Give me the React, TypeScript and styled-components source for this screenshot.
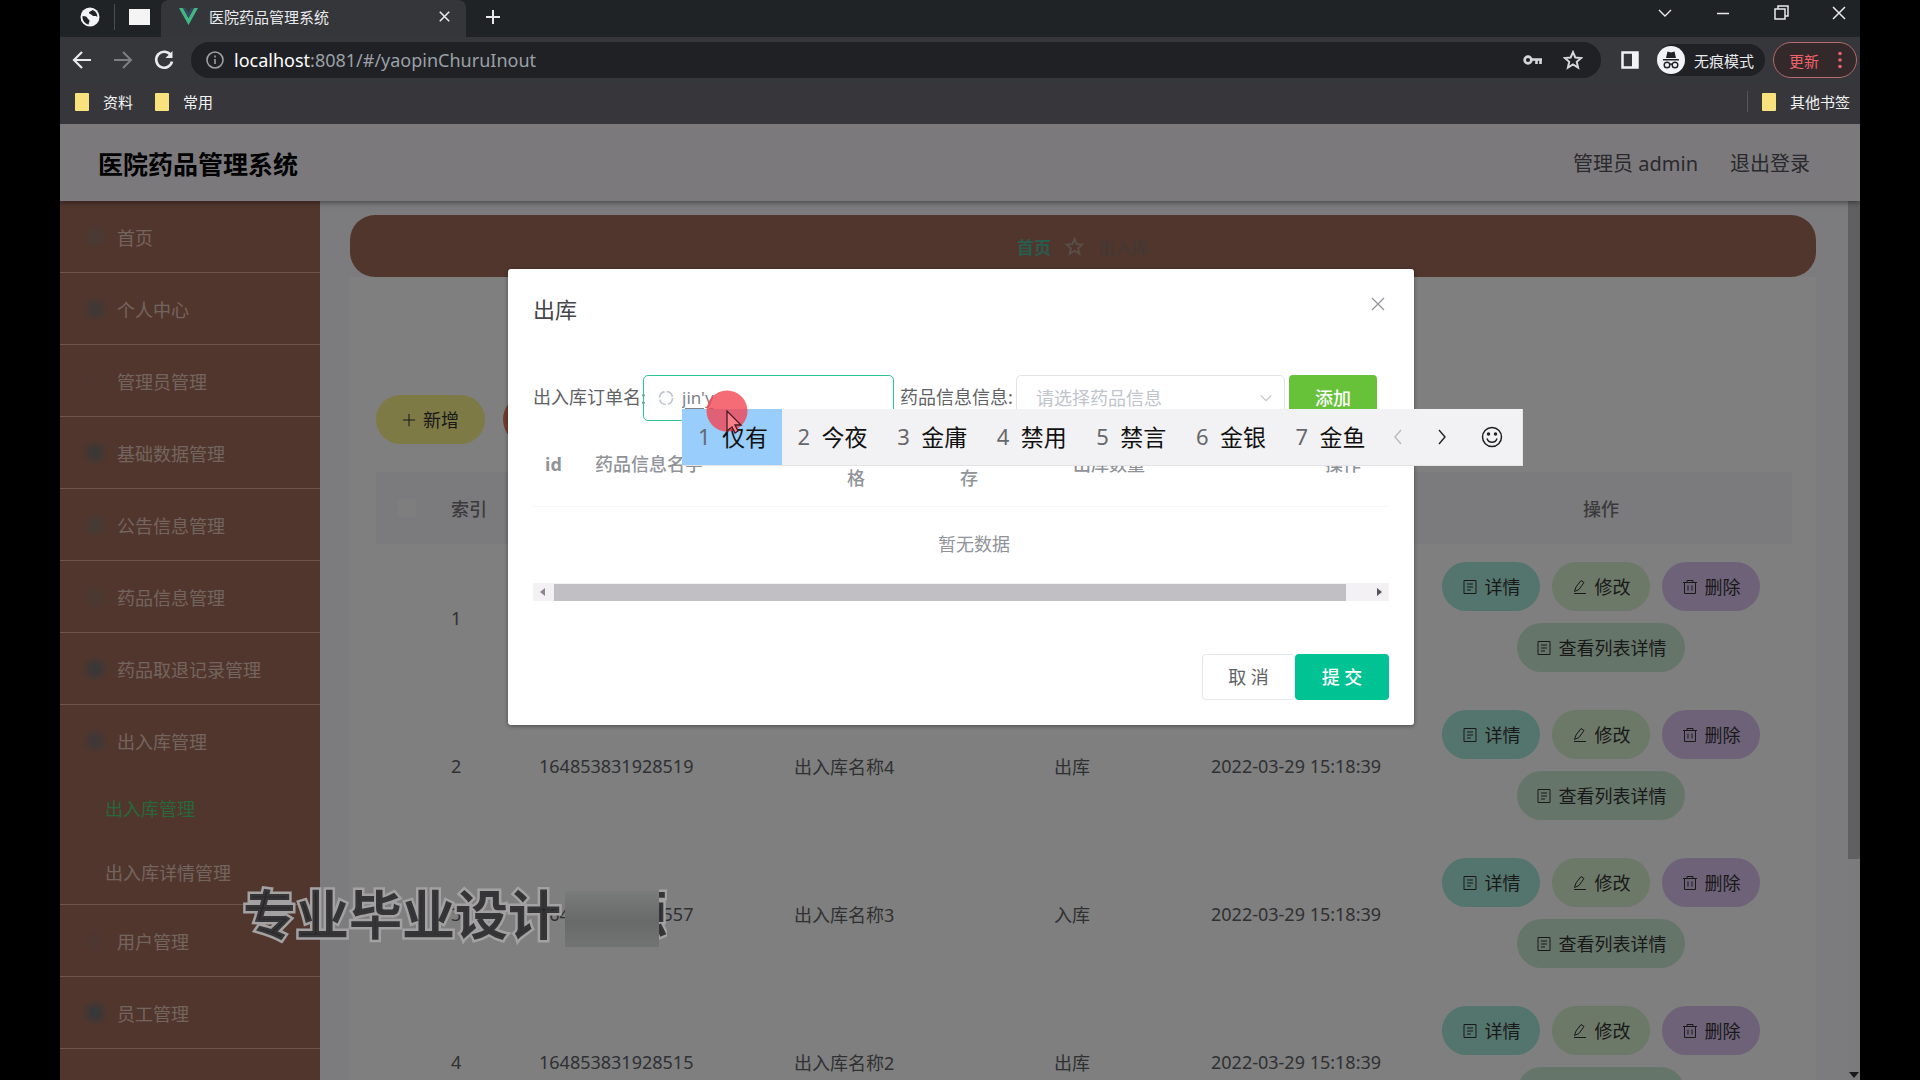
import React from 'react';
import styled, { createGlobalStyle, css } from 'styled-components';

const Global = createGlobalStyle`
  * { box-sizing: border-box; }
  html, body { margin: 0; background: #000; }
  body, button, input, select, table {
    font-family: "Noto Sans", "Noto Sans CJK SC", sans-serif;
    font-size: 18px;
  }
  button { border: 0; padding: 0; background: none; color: inherit; cursor: pointer; }
  a { color: inherit; text-decoration: none; }
  ul { margin: 0; padding: 0; list-style: none; }
  svg { display: block; flex: none; }
`;

const Screen = styled.div`
  height: 100vh;
  padding: 0 60px;
  overflow: hidden;
  display: flex;
  flex-direction: column;
  position: relative;
`;

/* ---------- browser chrome ---------- */

const TabStrip = styled.div`
  display: flex;
  height: 37px;
  flex: none;
  background: #202326;
  color: #e8eaed;
`;

const PinnedTabs = styled.div`
  display: flex;
  align-items: center;
  width: 101px;
  padding: 0 11px 4px 20px;
  gap: 14px;
  border-bottom-right-radius: 8px;
`;

const TabDivider = styled.span`
  width: 1px;
  height: 26px;
  background: #4a4d51;
`;

const ActiveTab = styled.div`
  display: flex;
  align-items: center;
  width: 305px;
  padding: 0 16px 4px 18px;
  gap: 11px;
  background: #35363a;
  border-radius: 8px 8px 0 0;
  font-size: 15px;
  span { flex: 1; }
`;

const NewTab = styled.button`
  width: 54px;
  padding-bottom: 4px;
  display: grid;
  place-items: center;
`;

const WindowButtons = styled.div`
  display: flex;
  align-items: center;
  margin-left: auto;
  padding-bottom: 12px;
  gap: 16px;
  button { width: 42px; height: 26px; display: grid; place-items: center; }
`;

const Toolbar = styled.div`
  display: flex;
  align-items: center;
  flex: none;
  height: 48px;
  padding: 0 3px 2px 10px;
  background: #35373a;
  color: #e8eaed;
`;

const NavButtons = styled.div`
  display: flex;
  gap: 17px;
  width: 121px;
`;

const AddressBar = styled.div`
  display: flex;
  align-items: center;
  flex: 1;
  height: 36px;
  padding: 0 18px 0 15px;
  gap: 10px;
  border-radius: 18px;
  background: #202125;
  color: #9aa0a6;
`;

const BarIcons = styled.div`
  display: flex;
  align-items: center;
  gap: 20px;
  color: #d5d7da;
`;

const Url = styled.div`
  flex: 1;
  font-size: 18px;
  line-height: 24px;
  b { font-weight: 400; color: #fff; }
`;

const SidePanelButton = styled.button`
  width: 56px;
  padding-left: 2px;
  display: grid;
  place-items: center;
`;

const Incognito = styled.div`
  display: flex;
  align-items: center;
  height: 32px;
  width: 108px;
  gap: 9px;
  border-radius: 16px;
  background: #202125;
  font-size: 15px;
  white-space: nowrap;
`;

const UpdateButton = styled.button`
  display: flex;
  align-items: center;
  justify-content: space-between;
  height: 36px;
  width: 84px;
  margin-left: 8px;
  padding: 0 14px 0 15px;
  border: 1px solid #b46a70;
  border-radius: 18px;
  background: #33282a;
  color: #f0626a;
  font-size: 15px;
`;

const Bookmarks = styled.div`
  display: flex;
  align-items: center;
  flex: none;
  height: 39px;
  padding: 0 10px 6px 15px;
  gap: 22px;
  background: #37373b;
  color: #f1f3f4;
  font-size: 15px;
`;

const Bookmark = styled.a`
  display: flex;
  align-items: center;
  gap: 14px;
`;

const OtherBookmarks = styled(Bookmark)`
  margin-left: auto;
  padding-left: 14px;
  border-left: 1px solid #54555a;
`;

const Folder = styled.span`
  width: 14px;
  height: 18px;
  border-radius: 1px;
  background: #f9e27d;
`;

/* ---------- page ---------- */

const Page = styled.div`
  position: relative;
  flex: 1;
  min-height: 0;
  display: flex;
  flex-direction: column;
  overflow: hidden;
  background: #fff;
  color: #606266;
`;

const Header = styled.header`
  display: flex;
  align-items: center;
  flex: none;
  height: 77px;
  padding: 0 50px 0 38px;
  gap: 32px;
  background: #f6f2f8;
  box-shadow: 0 1px 6px rgba(0, 0, 0, 0.5);
  z-index: 1;
  font-size: 20px;
  color: #55535a;
  h1 {
    margin: 0 auto 0 0;
    font-size: 25px;
    font-weight: 700;
    color: #000;
  }
`;

const Body = styled.div`
  display: flex;
  flex: 1;
  min-height: 0;
`;

const Sidebar = styled.nav`
  width: 260px;
  flex: none;
  background: #a26d5b;
  color: #e6c8bc;
`;

const MenuItem = styled.li`
  border-bottom: 1px solid #dda898;
`;

const MenuLink = styled.a`
  display: flex;
  align-items: center;
  height: 71px;
  padding-left: 27px;
  gap: 14px;
`;

const SubLink = styled.a<{ $active?: boolean }>`
  display: flex;
  align-items: center;
  height: 64px;
  padding-left: 45px;
  color: ${(p) => (p.$active ? '#4fcf74' : 'inherit')};
`;

const MenuGlyph = styled.span<{ $tint: string }>`
  width: 16px;
  height: 16px;
  border-radius: 5px;
  background: ${(p) => p.$tint};
  filter: blur(3px);
`;

const Main = styled.main`
  flex: 1;
  min-width: 0;
  padding: 14px 32px 0 30px;
  overflow: hidden;
  background: #f8f6fa;
`;

const Breadcrumb = styled.div`
  display: flex;
  align-items: center;
  justify-content: center;
  height: 62px;
  gap: 14px;
  border-radius: 25px;
  background: #a26d5b;
  font-size: 17px;
  color: #b59c92;
  a { color: #52b898; font-weight: 700; }
  span { color: #84706c; }
`;

const Card = styled.section`
  padding: 118px 24px 0 26px;
  background: #fefefe;
  height: 100%;
`;

const Actions = styled.div`
  display: flex;
  gap: 18px;
  margin-bottom: 28px;
`;

const Pill = styled.button<{ $bg: string; $wide?: boolean }>`
  display: flex;
  align-items: center;
  justify-content: center;
  height: 49px;
  width: ${(p) => (p.$wide ? 168 : 98)}px;
  gap: 7px;
  border-radius: 25px;
  background: ${(p) => p.$bg};
  color: #333;
  font-size: 18px;
  line-height: 26px;
  white-space: nowrap;
`;

const ActionPill = styled(Pill)`
  width: 109px;
`;

const DataTable = styled.table`
  width: 100%;
  border-collapse: collapse;
  table-layout: fixed;
  text-align: left;
  th { height: 72px; padding: 0 0 0 12px; font-weight: 500; background: #f6f4f8; color: #77747a; }
  td { height: 148px; padding: 0 0 0 12px; color: #606266; }
  th:last-child { text-align: center; padding: 0; }
  td:last-child { padding: 0 0 2px; }
`;

const RowActions = styled.div`
  display: flex;
  flex-wrap: wrap;
  justify-content: center;
  gap: 12px;
`;

const Check = styled.input`
  appearance: none;
  width: 18px;
  height: 18px;
  margin: 0 0 0 10px;
  border-radius: 3px;
  background: #fcfcfd;
  display: block;
`;

const ScrollTrack = styled.div`
  width: 12px;
  flex: none;
  display: flex;
  flex-direction: column;
  justify-content: space-between;
  align-items: center;
  background: #f6f5f8;
  padding-bottom: 2px;
`;

const ScrollThumb = styled.div`
  width: 12px;
  height: 75%;
  margin-bottom: auto;
  background: #c1c1c4;
`;

const Overlay = styled.div`
  position: absolute;
  inset: 0;
  z-index: 2;
  display: flex;
  justify-content: center;
  align-items: flex-start;
  padding: 145px 0 0 2px;
  background: rgba(0, 0, 0, 0.5);
`;

/* ---------- dialog ---------- */

const Dialog = styled.section`
  position: relative;
  width: 906px;
  padding: 24px 25px 25px 25px;
  border-radius: 3px;
  background: #fff;
  box-shadow: 0 1px 4px rgba(0, 0, 0, 0.4);
`;

const DialogHead = styled.div`
  display: flex;
  justify-content: space-between;
  margin-bottom: 50px;
  h2 { margin: 0; font-size: 22px; line-height: 32px; font-weight: 400; color: #45464a; }
  button { height: 22px; width: 22px; color: #909399; display: grid; place-items: center; }
`;

const FormRow = styled.div`
  display: flex;
  align-items: center;
  color: #606266;
  label { white-space: nowrap; width: 110px; line-height: 24px; padding-bottom: 2px; }
`;

const OrderField = styled.div`
  display: flex;
  align-items: center;
  flex: none;
  width: 251px;
  height: 46px;
  padding: 0 13px;
  gap: 7px;
  margin-right: 6px;
  border: 1px solid #2fc58f;
  border-radius: 5px;
  color: #c0c4cc;
  input {
    width: 100%;
    border: 0;
    padding: 0 0 2px;
    outline: 0;
    background: none;
    color: #808287;
    font-size: 17px;
    text-decoration: underline;
    text-underline-offset: 4px;
  }
`;

const DrugField = styled.div`
  display: flex;
  align-items: center;
  flex: none;
  width: 269px;
  height: 46px;
  padding: 0 11px 0 19px;
  margin: 0 4px 0 6px;
  border: 1px solid #e2e3e8;
  border-radius: 5px;
  color: #c0c4cc;
  select {
    appearance: none;
    flex: 1;
    border: 0;
    padding: 0;
    background: none;
    color: #c0c4cc;
    font-size: 18px;
  }
`;

const solid = css`
  height: 46px;
  padding-bottom: 2px;
  border-radius: 4px;
  color: #fff;
  font-weight: 500;
`;

const AddButton = styled.button`
  ${solid}
  width: 88px;
  background: #67c23a;
`;

const StockTable = styled.table`
  width: 100%;
  margin-top: 12px;
  border-collapse: collapse;
  table-layout: fixed;
  line-height: 29px;
  color: #909399;
  th { height: 73px; padding: 0 0 10px; font-weight: 500; text-align: left; vertical-align: middle; border-bottom: 1px solid #f8f8fa; }
  th:first-child { padding-left: 12px; font-weight: 700; }
  td { height: 77px; text-align: center; padding: 0 0 0 26px; }
`;

const WrapCell = styled.span`
  display: block;
  width: 18px;
`;

const HScroll = styled.div`
  display: flex;
  align-items: center;
  height: 18px;
  padding: 0 7px;
  gap: 9px;
  background: #f3f1f4;
  color: #57555a;
`;

const HThumb = styled.div`
  flex: 1;
  height: 17px;
  margin-right: 22px;
  background: #c1bfc3;
`;

const Footer = styled.div`
  display: flex;
  justify-content: flex-end;
  padding-top: 53px;
`;

const CancelButton = styled.button`
  width: 93px;
  height: 46px;
  padding-bottom: 2px;
  border: 1px solid #e6e7ec;
  border-right-color: #f6f7f9;
  border-radius: 4px;
  color: #606266;
`;

const SubmitButton = styled.button`
  ${solid}
  width: 94px;
  background: #00c292;
`;

/* ---------- floating layers ---------- */

const Ime = styled.div`
  position: absolute;
  z-index: 3;
  left: 174px;
  top: 140px;
  display: flex;
  width: 841px;
  height: 57px;
  background: #f2f2f4;
  border: 1px solid #e4e4e6;
  border-width: 0 1px 1px 0;
  color: #111;
`;

const Candidates = styled.div`
  display: flex;
  width: 697px;
  button { flex: 1; display: flex; align-items: center; padding: 0 0 2px 16px; gap: 12px; font-size: 23px; }
  button:first-child { background: #99cdfc; }
  span { color: #66686c; width: 12px; font-size: 22px; }
`;

const ImeTool = styled.button<{ $w: number; $light?: boolean }>`
  width: ${(p) => p.$w}px;
  display: grid;
  place-items: center;
  color: ${(p) => (p.$light ? '#b9babc' : '#222')};
`;

const Cursor = styled.div`
  position: absolute;
  z-index: 4;
  left: 198px;
  top: 121px;
`;

const Watermark = styled.div`
  position: absolute;
  z-index: 3;
  left: 243px;
  top: 879px;
  display: flex;
  align-items: center;
  font-size: 53px;
  line-height: 72px;
  font-weight: 700;
  color: rgba(35, 35, 38, 0.85);
  -webkit-text-stroke: 5px #a3a1a1;
  paint-order: stroke fill;
`;

const Smudge = styled.span`
  width: 94px;
  height: 56px;
  margin: 8px 0 0 4px;
  background: linear-gradient(180deg, #7a7c7b, #686a69 55%, #727473);
`;

const Sliver = styled.span`
  display: flex;
  justify-content: flex-end;
  width: 8px;
  overflow: hidden;
`;

/* ---------- icons ---------- */

const stroke = { fill: 'none', stroke: 'currentColor' } as const;

const DocIcon = () => (
  <svg width="16" height="16" viewBox="0 0 16 16" {...stroke}>
    <path d="M2 1.5h12v13H2zM5 5h6M5 8h6M5 11h4" />
  </svg>
);
const PenIcon = () => (
  <svg width="16" height="16" viewBox="0 0 16 16" {...stroke}>
    <path d="M2.5 12.5 4 8 9 1.500 12 3.500 7 10.500zM2 14.500h12" />
  </svg>
);
const TrashIcon = () => (
  <svg width="16" height="16" viewBox="0 0 16 16" {...stroke}>
    <path d="M1 3.500h14M5 3.500v-2h6v2M2.500 3.500v11h11v-11M6 6.500v5M10 6.500v5" />
  </svg>
);
const XIcon = ({ size = 14, w = 1.5 }: { size?: number; w?: number }) => (
  <svg width={size} height={size} viewBox="0 0 14 14" {...stroke} strokeWidth={w}>
    <path d="M1 1 13 13M13 1 1 13" />
  </svg>
);
const PlusIcon = ({ size = 16, w = 1.2 }: { size?: number; w?: number }) => (
  <svg width={size} height={size} viewBox="0 0 16 16" {...stroke} strokeWidth={w}>
    <path d="M8 1v14M1 8h14" />
  </svg>
);
const Chevron = ({ d, size = 16 }: { d: 'down' | 'left' | 'right'; size?: number }) => (
  <svg width={size} height={size} viewBox="0 0 16 16" {...stroke} strokeWidth="1.4">
    <path d={{ down: 'M2 5l6 6 6-6', left: 'M11 1 5 8l6 7', right: 'M5 1l6 7-6 7' }[d]} />
  </svg>
);
const StarIcon = ({ size = 19 }: { size?: number }) => (
  <svg width={size} height={size} viewBox="0 0 24 24" {...stroke} strokeWidth="2.400">
    <path d="M12 2.500 14.800 9l7 .6-5.300 4.600 1.600 6.900L12 17.400l-6.100 3.700 1.600-6.900L2.200 9.600l7-.6z" />
  </svg>
);

const menuTop: [string, string][] = [
  ['首页', '#91776a'],
  ['个人中心', '#7c716f'],
  ['管理员管理', '#9f6f5f'],
  ['基础数据管理', '#74716d'],
  ['公告信息管理', '#88756a'],
  ['药品信息管理', '#937464'],
  ['药品取退记录管理', '#717072'],
];

const rows: [string, string, string, string][] = [
  ['1', '164853831928521', '出入库名称5', '入库'],
  ['2', '164853831928519', '出入库名称4', '出库'],
  ['3', '164853831928557', '出入库名称3', '入库'],
  ['4', '164853831928515', '出入库名称2', '出库'],
];

const candidates = ['仅有', '今夜', '金庸', '禁用', '禁言', '金银', '金鱼'];

function BrowserChrome() {
  return (
    <>
      <TabStrip>
        <PinnedTabs>
          <svg width="20" height="20" viewBox="0 0 20 20">
            <circle cx="10" cy="10" r="9.500" fill="#f1f3f4" />
            <path d="M2.500 9c3 0 4.500.8 5 2.300.4 1.200 2 1 2 2.500 0 1.300-.8 2-.8 3.700C5 17 2.200 13.500 2.500 9zM12.500 3c-1 1.400-3 1-3.500 2.500-.4 1.300 1.500 1.300 2.500 2.200 1 .8 1.800 1.500 3.300 1.300 1.200-.2 1.700.3 2.500 1C17.500 6.500 15.500 4 12.500 3z" fill="#202326" />
          </svg>
          <TabDivider />
          <svg width="21" height="16" viewBox="0 0 21 16"><path d="M0 0h21v16H0z" fill="#f4f4f4" /></svg>
        </PinnedTabs>
        <ActiveTab>
          <svg width="19" height="17" viewBox="0 0 19 17">
            <path d="M0 0h4l5.500 10L15 0h4L9.500 17z" fill="#41b883" />
            <path d="M4 0h3l2.500 4.500L12 0h3L9.500 10z" fill="#35495e" />
          </svg>
          <span>医院药品管理系统</span>
          <button aria-label="关闭标签页"><XIcon size={11} w={2} /></button>
        </ActiveTab>
        <NewTab aria-label="新标签页"><PlusIcon size={16} w={2} /></NewTab>
        <WindowButtons>
          <button aria-label="搜索标签页"><Chevron d="down" /></button>
          <button aria-label="最小化">
            <svg width="14" height="14" viewBox="0 0 14 14" {...stroke}><path d="M1 7.500h12" strokeWidth="1.500" /></svg>
          </button>
          <button aria-label="还原">
            <svg width="15" height="15" viewBox="0 0 15 15" {...stroke} strokeWidth="1.500"><path d="M1 4h10v10H1zM4 4V1h10v10h-3" /></svg>
          </button>
          <button aria-label="关闭"><XIcon size={14} /></button>
        </WindowButtons>
      </TabStrip>
      <Toolbar>
        <NavButtons>
          <button aria-label="后退">
            <svg width="24" height="24" viewBox="0 0 24 24" {...stroke} strokeWidth="2.200"><path d="M21 12H4M12 4l-8 8 8 8" /></svg>
          </button>
          <button aria-label="前进">
            <svg width="24" height="24" viewBox="0 0 24 24" fill="none" stroke="#7c7f83" strokeWidth="2"><path d="M3 12h17M12 4l8 8-8 8" /></svg>
          </button>
          <button aria-label="刷新">
            <svg width="24" height="24" viewBox="0 0 24 24" {...stroke} strokeWidth="2.600"><path d="M19 7.500A8 8 0 1 0 20 13.500" /><path d="M20.500 3v7h-7z" fill="currentColor" stroke="none" /></svg>
          </button>
        </NavButtons>
        <AddressBar>
          <svg width="18" height="18" viewBox="0 0 18 18" {...stroke} strokeWidth="1.600"><circle cx="9" cy="9" r="8" /><path d="M9 8v5M9 4.500v2" /></svg>
          <Url><b>localhost</b>:8081/#/yaopinChuruInout</Url>
          <BarIcons>
            <svg width="20" height="14" viewBox="0 0 20 14" {...stroke} strokeWidth="2.600"><circle cx="5" cy="7" r="3.400" /><path d="M8.500 6.500H19M13.500 7v4M17.500 7v4" /></svg>
            <StarIcon size={20} />
          </BarIcons>
        </AddressBar>
        <SidePanelButton aria-label="侧边栏">
          <svg width="18" height="18" viewBox="0 0 18 18"><path d="M1.500 1.500h15v15h-15z" fill="none" stroke="#f1f3f4" strokeWidth="2.500" /><path d="M11 1h6v16h-6z" fill="#f1f3f4" /></svg>
        </SidePanelButton>
        <Incognito>
          <svg width="28" height="28" viewBox="0 0 28 28">
            <circle cx="14" cy="14" r="14" fill="#f1f3f4" />
            <path d="M6 13h16v1.500H6zM9 12l1.500-6.500L14 6.500l3.500-1L19 12z" fill="#202326" />
            <g fill="none" stroke="#202326" strokeWidth="1.400"><circle cx="10" cy="19" r="2.800" /><circle cx="18" cy="19" r="2.800" /><path d="M12.800 18.500q1.200-1 2.400 0" /></g>
          </svg>
          无痕模式
        </Incognito>
        <UpdateButton>
          更新
          <svg width="4" height="18" viewBox="0 0 4 18" fill="currentColor"><circle cx="2" cy="2.500" r="1.800" /><circle cx="2" cy="9" r="1.800" /><circle cx="2" cy="15.500" r="1.800" /></svg>
        </UpdateButton>
      </Toolbar>
      <Bookmarks>
        <Bookmark href="#"><Folder />资料</Bookmark>
        <Bookmark href="#"><Folder />常用</Bookmark>
        <OtherBookmarks href="#"><Folder />其他书签</OtherBookmarks>
      </Bookmarks>
    </>
  );
}

function SideMenu() {
  return (
    <Sidebar>
      <ul>
        {menuTop.map(([label, tint]) => (
          <MenuItem key={label}>
            <MenuLink href="#"><MenuGlyph $tint={tint} />{label}</MenuLink>
          </MenuItem>
        ))}
        <MenuItem>
          <MenuLink href="#"><MenuGlyph $tint="#7c6f71" />出入库管理</MenuLink>
          <SubLink href="#" $active>出入库管理</SubLink>
          <SubLink href="#">出入库详情管理</SubLink>
        </MenuItem>
        <MenuItem><MenuLink href="#"><MenuGlyph $tint="#986e62" />用户管理</MenuLink></MenuItem>
        <MenuItem><MenuLink href="#"><MenuGlyph $tint="#6b7072" />员工管理</MenuLink></MenuItem>
      </ul>
    </Sidebar>
  );
}

function RecordTable() {
  return (
    <DataTable>
      <colgroup>
        <col style={{ width: 63 }} />
        <col style={{ width: 88 }} />
        <col style={{ width: 255 }} />
        <col style={{ width: 260 }} />
        <col style={{ width: 157 }} />
        <col />
        <col style={{ width: 382 }} />
      </colgroup>
      <thead>
        <tr>
          <th><Check type="checkbox" aria-label="全选" /></th>
          <th>索引</th><th>订单号</th><th>出入库名称</th><th>类型</th><th>添加时间</th><th>操作</th>
        </tr>
      </thead>
      <tbody>
        {rows.map(([n, order, name, kind]) => (
          <tr key={n}>
            <td />
            <td>{n}</td><td>{order}</td><td>{name}</td><td>{kind}</td><td>2022-03-29 15:18:39</td>
            <td>
              <RowActions>
                <Pill $bg="#a8e8dc"><DocIcon />详情</Pill>
                <Pill $bg="#d9f0d0"><PenIcon />修改</Pill>
                <Pill $bg="#dcc4f0"><TrashIcon />删除</Pill>
                <Pill $bg="#cdebd2" $wide><DocIcon />查看列表详情</Pill>
              </RowActions>
            </td>
          </tr>
        ))}
      </tbody>
    </DataTable>
  );
}

function StockOutDialog() {
  return (
    <Dialog role="dialog" aria-labelledby="dialog-title">
      <DialogHead>
        <h2 id="dialog-title">出库</h2>
        <button aria-label="关闭"><XIcon size={14} w={1.2} /></button>
      </DialogHead>
      <FormRow>
        <label htmlFor="order">出入库订单名:</label>
        <OrderField>
          <svg width="18" height="18" viewBox="0 0 18 18" {...stroke} strokeWidth="1.600"><circle cx="9" cy="9" r="6.500" strokeDasharray="8 2.200" /></svg>
          <input id="order" defaultValue="jin'y" />
        </OrderField>
        <label htmlFor="drug">药品信息信息:</label>
        <DrugField>
          <select id="drug"><option>请选择药品信息</option></select>
          <Chevron d="down" size={14} />
        </DrugField>
        <AddButton>添加</AddButton>
      </FormRow>
      <StockTable>
        <colgroup>
          <col style={{ width: 62 }} />
          <col style={{ width: 252 }} />
          <col style={{ width: 113 }} />
          <col style={{ width: 113 }} />
          <col />
          <col style={{ width: 64 }} />
        </colgroup>
        <thead>
          <tr>
            <th>id</th>
            <th>药品信息名字</th>
            <th><WrapCell>价格</WrapCell></th>
            <th><WrapCell>库存</WrapCell></th>
            <th>出库数量</th>
            <th>操作</th>
          </tr>
        </thead>
        <tbody><tr><td colSpan={6}>暂无数据</td></tr></tbody>
      </StockTable>
      <HScroll>
        <svg width="5" height="8" viewBox="0 0 5 8" fill="#8b898e"><path d="M5 0v8L0 4z" /></svg>
        <HThumb />
        <svg width="5" height="8" viewBox="0 0 5 8" fill="currentColor"><path d="M0 0v8l5-4z" /></svg>
      </HScroll>
      <Footer>
        <CancelButton>取 消</CancelButton>
        <SubmitButton>提 交</SubmitButton>
      </Footer>
      <Ime>
        <Candidates>
          {candidates.map((word, i) => (
            <button key={word}><span>{i + 1}</span>{word}</button>
          ))}
        </Candidates>
        <ImeTool $w={38} $light aria-label="上一页"><Chevron d="left" size={16} /></ImeTool>
        <ImeTool $w={50} aria-label="下一页"><Chevron d="right" size={16} /></ImeTool>
        <ImeTool $w={50} aria-label="表情">
          <svg width="22" height="22" viewBox="0 0 22 22" {...stroke} strokeWidth="1.500">
            <circle cx="11" cy="11" r="9.500" /><path d="M6 12.500c1.500 5 8.500 5 10 0" />
            <circle cx="7.500" cy="8" r="1" fill="currentColor" /><circle cx="14.500" cy="8" r="1" fill="currentColor" />
          </svg>
        </ImeTool>
      </Ime>
      <Cursor>
        <svg width="42" height="48" viewBox="0 0 42 48">
          <circle cx="21" cy="21" r="20.500" fill="#f4424f" fillOpacity=".78" />
          <path d="M21 21v20l5-4 3 6 3-2-3-6h6z" fill="#f7808a" stroke="#4a1820" strokeWidth="1.300" />
        </svg>
      </Cursor>
    </Dialog>
  );
}

export default function App() {
  return (
    <Screen>
      <Global />
      <BrowserChrome />
      <Page>
        <Header>
          <h1>医院药品管理系统</h1>
          <span>管理员 admin</span>
          <a href="#">退出登录</a>
        </Header>
        <Body>
          <SideMenu />
          <Main>
            <Breadcrumb>
              <a href="#">首页</a>
              <StarIcon />
              <span>出入库</span>
            </Breadcrumb>
            <Card>
              <Actions>
                <ActionPill $bg="#fcf48c"><PlusIcon size={14} />新增</ActionPill>
                <ActionPill $bg="#e07a5c"><TrashIcon />删除</ActionPill>
              </Actions>
              <RecordTable />
            </Card>
          </Main>
          <ScrollTrack>
            <ScrollThumb />
            <svg width="10" height="6" viewBox="0 0 10 6"><path d="M0 0h10L5 6z" fill="#333" /></svg>
          </ScrollTrack>
        </Body>
        <Overlay><StockOutDialog /></Overlay>
      </Page>
      <Watermark>专业毕业设计<Smudge /><Sliver>源</Sliver></Watermark>
    </Screen>
  );
}
